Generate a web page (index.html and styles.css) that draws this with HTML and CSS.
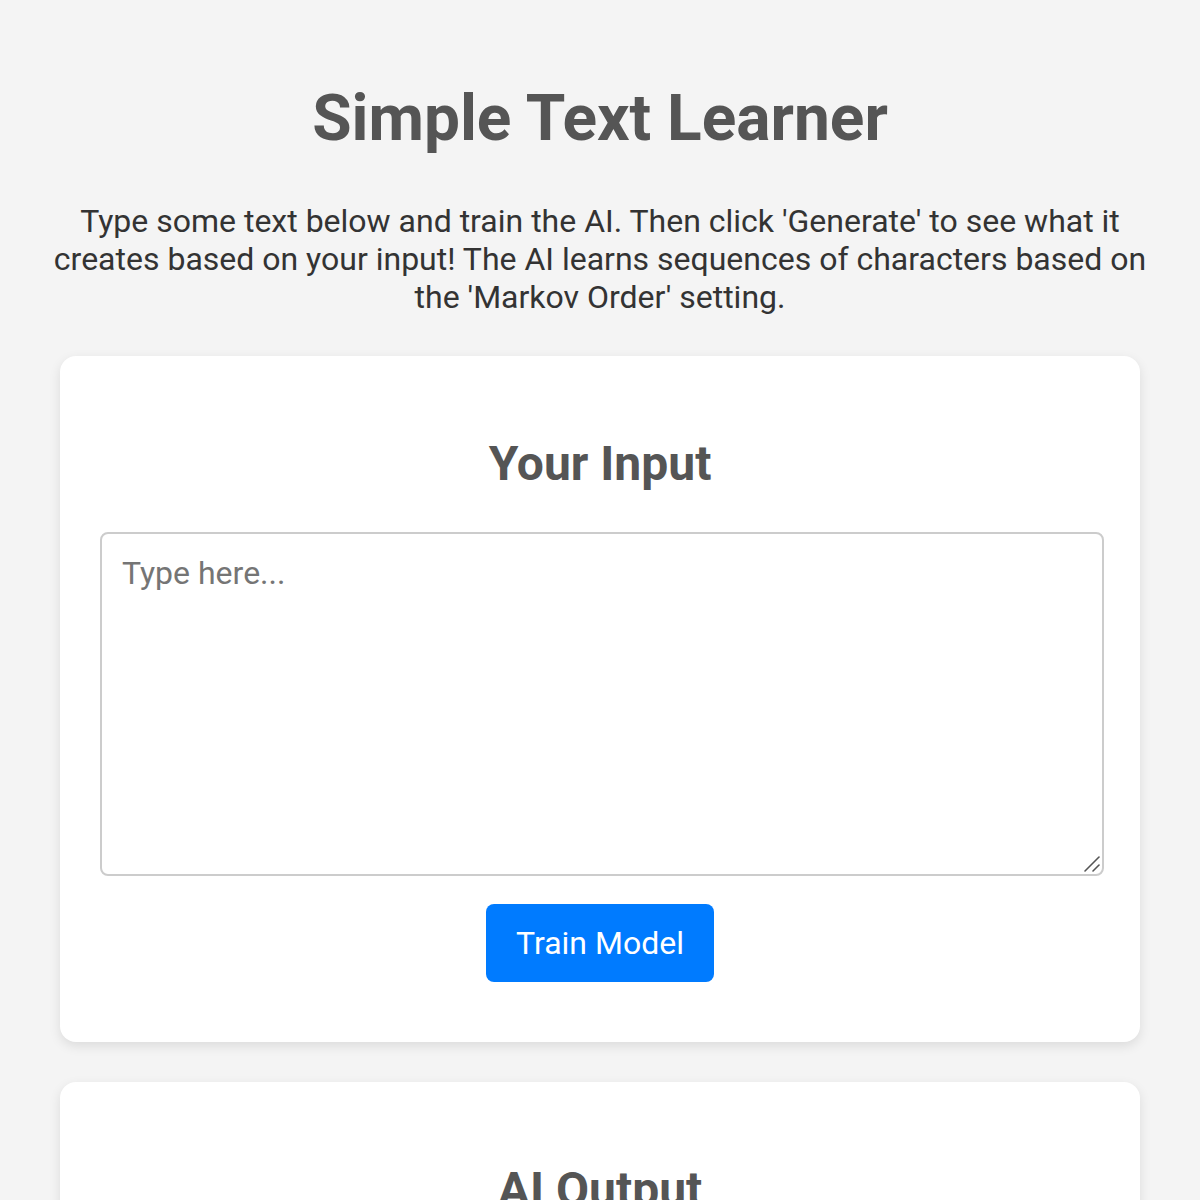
FILE: index.html
```html
<!DOCTYPE html>
<html lang="en">
<head>
<meta charset="utf-8">
<title>Simple Text Learner</title>
<link rel="stylesheet" href="styles.css">
</head>
<body>
<main class="page">
  <h1 class="title">Simple Text Learner</h1>
  <p class="intro">Type some text below and train the AI. Then click 'Generate' to see what it creates based on your input! The AI learns sequences of characters based on the 'Markov Order' setting.</p>
  <section class="card">
    <h2 class="card-title">Your Input</h2>
    <div class="input-wrap">
      <textarea class="input" placeholder="Type here..."></textarea>
      <svg class="grip" width="18" height="18" viewBox="0 0 18 18" aria-hidden="true">
        <line x1="2" y1="16" x2="16" y2="2" stroke="#555" stroke-width="1.6" stroke-linecap="round"/>
        <line x1="10" y1="16" x2="16" y2="10" stroke="#555" stroke-width="1.6" stroke-linecap="round"/>
      </svg>
    </div>
    <div class="actions">
      <button class="btn" type="button">Train Model</button>
    </div>
  </section>
  <section class="card">
    <h2 class="card-title">AI Output</h2>
    <div class="output"></div>
  </section>
</main>
</body>
</html>
```
FILE: styles.css
```css
* { box-sizing: border-box; }
html, body {
  margin: 0;
  padding: 0;
  background: #f4f4f4;
}
body {
  font-family: Roboto, "Liberation Sans", Arial, sans-serif;
  color: #333;
}
.page {
  width: 1100px;
  margin: 0 auto;
  padding-top: 81px;
  display: flex;
  flex-direction: column;
  align-items: center;
}
.title {
  margin: 0;
  font-size: 64px;
  font-weight: 700;
  color: #555;
  line-height: 75px;
  text-align: center;
}
.intro {
  margin: 46px 0 40px;
  font-size: 32px;
  line-height: 38px;
  text-align: center;
  color: #333;
}
.card {
  width: 1080px;
  background: #fff;
  border-radius: 16px;
  box-shadow: 0 4px 12px rgba(0, 0, 0, 0.1);
  padding: 40px;
  margin-bottom: 40px;
  display: flex;
  flex-direction: column;
  align-items: center;
}
.card-title {
  margin: 40px 0 40px;
  font-size: 48px;
  font-weight: 700;
  color: #555;
  line-height: 56px;
}
.input-wrap {
  position: relative;
  align-self: flex-start;
  width: 1004px;
  height: 344px;
}
.input {
  display: block;
  width: 100%;
  height: 100%;
  margin: 0;
  padding: 20px;
  border: 2px solid #ccc;
  border-radius: 8px;
  font-family: Roboto, "Liberation Sans", Arial, sans-serif;
  font-size: 32px;
  color: #333;
  background: #fff;
  resize: none;
}
.input::placeholder { color: #757575; }
.grip {
  position: absolute;
  right: 3px;
  bottom: 3px;
  pointer-events: none;
}
.actions {
  margin-top: 28px;
  margin-bottom: 20px;
}
.btn {
  height: 78px;
  padding: 0 30px;
  border: none;
  border-radius: 8px;
  background: #007bff;
  color: #fff;
  font-family: Roboto, "Liberation Sans", Arial, sans-serif;
  font-size: 32px;
  cursor: pointer;
}
.output {
  height: 300px;
}
```
